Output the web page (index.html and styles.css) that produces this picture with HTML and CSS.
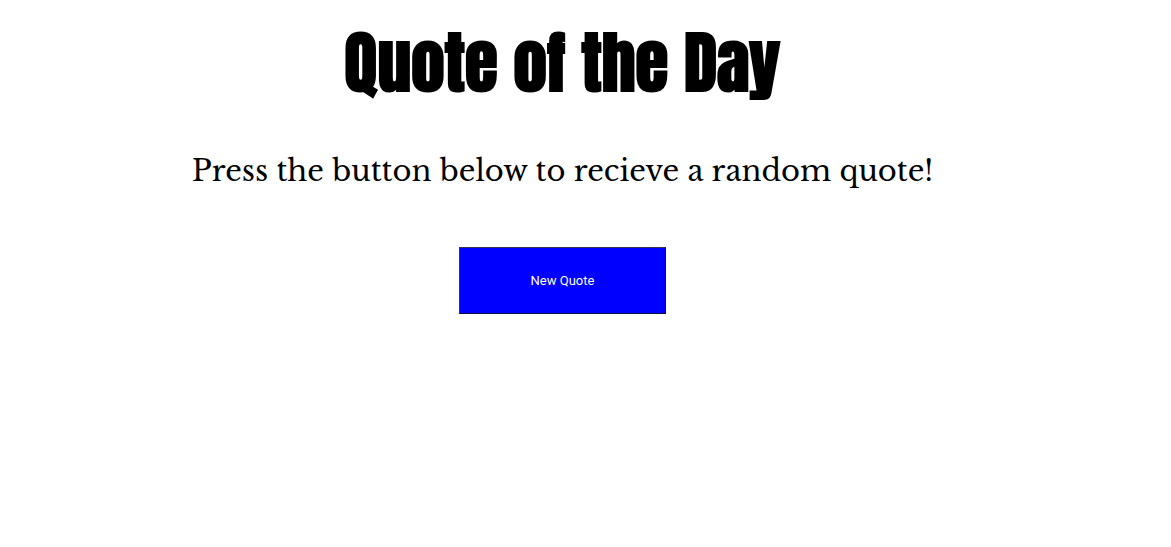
FILE: index.html
```html
<!DOCTYPE html>
<html lang="en">
<head>
<meta charset="utf-8">
<title>Quote of the Day</title>
<link rel="stylesheet" href="styles.css">
</head>
<body>
<main class="page">
  <h1 class="title">Quote of the Day</h1>
  <p class="quote">Press the button below to recieve a random quote!</p>
  <button class="new-quote" type="button">New Quote</button>
</main>
</body>
</html>
```

FILE: styles.css
```css
body {
  margin: 0;
  background: #fff;
  color: #000;
}

.page {
  display: flex;
  flex-direction: column;
  align-items: center;
  padding: 15px 46px 32px 0;
}

.title {
  margin: 0;
  font-family: Anton, Roboto, sans-serif;
  font-size: 67px;
  font-weight: 700;
  line-height: 96px;
  text-align: center;
}

.quote {
  margin: 36px 0 52px;
  font-family: "Libre Baskerville", "Liberation Serif", serif;
  font-size: 29px;
  line-height: 48px;
  text-align: center;
}

.new-quote {
  padding: 24px 71px;
  border: 1px solid;
  border-color: #33335c #111133 #111133 #33335c;
  background: #00f;
  color: #fff;
  font-family: Roboto, sans-serif;
  font-size: 13px;
  line-height: 17px;
}
```
